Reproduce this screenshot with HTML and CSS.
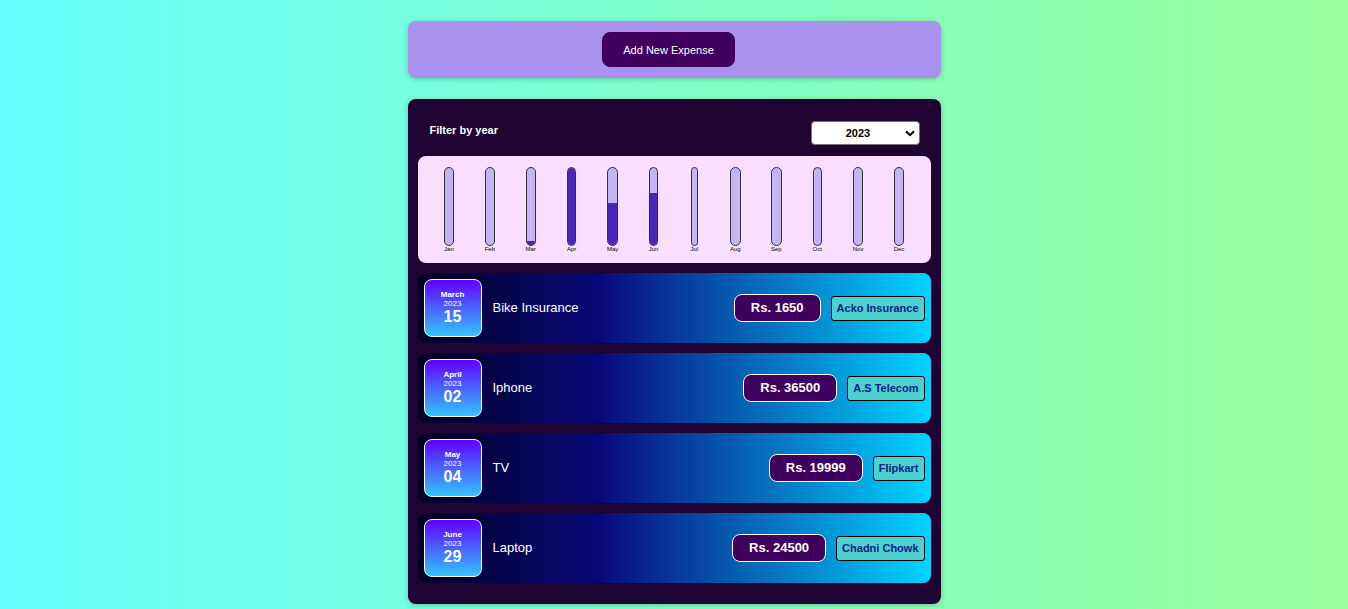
FILE: index.html
```html
<!DOCTYPE html>
<html lang="en">
<head>
<meta charset="utf-8">
<meta name="viewport" content="width=device-width, initial-scale=1">
<title>Expenses</title>
<link rel="stylesheet" href="styles.css">
</head>
<body>
<main class="page">
  <section class="new-expense">
    <button class="add-button" type="button">Add New Expense</button>
  </section>
  <section class="expenses">
    <div class="filter">
      <label class="filter-label" for="year">Filter by year</label>
      <span class="select-wrap">
        <select class="year-select" id="year">
          <option>2024</option>
          <option selected>2023</option>
          <option>2022</option>
        </select>
        <svg class="chevron" viewBox="0 0 10 7" aria-hidden="true"><path d="M1 1.2 5 5.2 9 1.2"/></svg>
      </span>
    </div>
    <div class="chart">
      <div class="month"><div class="bar"><div class="fill" style="height:0%"></div></div><span>Jan</span></div>
      <div class="month"><div class="bar"><div class="fill" style="height:0%"></div></div><span>Feb</span></div>
      <div class="month"><div class="bar"><div class="fill" style="height:5%"></div></div><span>Mar</span></div>
      <div class="month"><div class="bar"><div class="fill" style="height:100%"></div></div><span>Apr</span></div>
      <div class="month"><div class="bar"><div class="fill" style="height:55%"></div></div><span>May</span></div>
      <div class="month"><div class="bar"><div class="fill" style="height:67%"></div></div><span>Jun</span></div>
      <div class="month"><div class="bar"><div class="fill" style="height:0%"></div></div><span>Jul</span></div>
      <div class="month"><div class="bar"><div class="fill" style="height:0%"></div></div><span>Aug</span></div>
      <div class="month"><div class="bar"><div class="fill" style="height:0%"></div></div><span>Sep</span></div>
      <div class="month"><div class="bar"><div class="fill" style="height:0%"></div></div><span>Oct</span></div>
      <div class="month"><div class="bar"><div class="fill" style="height:0%"></div></div><span>Nov</span></div>
      <div class="month"><div class="bar"><div class="fill" style="height:0%"></div></div><span>Dec</span></div>
    </div>
    <ul class="list">
      <li class="item">
        <div class="date"><strong>March</strong><span>2023</span><b class="day">15</b></div>
        <h2 class="title">Bike Insurance</h2>
        <div class="price">Rs. 1650</div>
        <div class="place">Acko Insurance</div>
      </li>
      <li class="item">
        <div class="date"><strong>April</strong><span>2023</span><b class="day">02</b></div>
        <h2 class="title">Iphone</h2>
        <div class="price">Rs. 36500</div>
        <div class="place">A.S Telecom</div>
      </li>
      <li class="item">
        <div class="date"><strong>May</strong><span>2023</span><b class="day">04</b></div>
        <h2 class="title">TV</h2>
        <div class="price">Rs. 19999</div>
        <div class="place">Flipkart</div>
      </li>
      <li class="item">
        <div class="date"><strong>June</strong><span>2023</span><b class="day">29</b></div>
        <h2 class="title">Laptop</h2>
        <div class="price">Rs. 24500</div>
        <div class="place">Chadni Chowk</div>
      </li>
    </ul>
  </section>
</main>
</body>
</html>
```

FILE: styles.css
```css
* { box-sizing: border-box; }

body {
  margin: 0;
  min-height: 100vh;
  background: linear-gradient(to right, #66ffff, #99ff99);
  font-family: "Liberation Sans", Arial, sans-serif;
}

.page {
  display: flex;
  flex-direction: column;
  gap: 21px;
  max-width: 533px;
  margin: 0 auto;
  padding: 21px 0 5px;
}

.new-expense {
  padding: 11px;
  border-radius: 8px;
  background: #a892ee;
  box-shadow: 0 1px 5px rgba(0, 0, 0, 0.25);
  display: flex;
  justify-content: center;
}

.add-button {
  margin-right: 11px;
  padding: 12px 20px 10px;
  border: 1px solid #40005d;
  border-radius: 8px;
  background: #40005d;
  color: #fff;
  font: 11px/11px "Liberation Sans", Arial, sans-serif;
}

.expenses {
  padding: 11px 10px 21px;
  border-radius: 8px;
  background: #1f0433;
  box-shadow: 0 1px 5px rgba(0, 0, 0, 0.25);
}

.filter {
  display: flex;
  justify-content: space-between;
  align-items: flex-start;
  padding: 11px 11px 11px 12px;
}

.filter-label {
  padding-top: 2px;
  color: #fff;
  font-size: 11px;
  line-height: 14px;
  font-weight: bold;
}

.select-wrap {
  display: grid;
  align-items: center;
  width: 109px;
}

.year-select {
  grid-area: 1 / 1;
  width: 100%;
  height: 24px;
  padding: 0 14px 0 0;
  border: 1px solid #767676;
  border-radius: 4px;
  background: #fff;
  color: #000;
  font: bold 11px "Liberation Sans", Arial, sans-serif;
  text-align: center;
  text-align-last: center;
  appearance: none;
}

.chevron {
  grid-area: 1 / 1;
  justify-self: end;
  width: 10px;
  height: 7px;
  margin-right: 5px;
  pointer-events: none;
  fill: none;
  stroke: #000;
  stroke-width: 2;
}

.chart {
  display: grid;
  grid-template-columns: repeat(12, 1fr);
  justify-items: center;
  padding: 11px;
  border-radius: 8px;
  background: #f8dfff;
}

.month {
  display: flex;
  flex-direction: column;
  color: #000;
  font-size: 6px;
  line-height: 6px;
}

.bar {
  display: flex;
  flex-direction: column;
  justify-content: flex-end;
  height: 79px;
  overflow: hidden;
  border: 1px solid #313131;
  border-radius: 8px;
  background: #c3b4f3;
}

.fill { background: #4826b9; }

.list {
  display: flex;
  flex-direction: column;
  gap: 10px;
  margin: 10px 0 0;
  padding: 0;
  list-style: none;
}

.item {
  display: flex;
  align-items: center;
  padding: 6px;
  border-radius: 8px;
  background: linear-gradient(90deg, #020024 0%, #090979 35%, #00d4ff 100%);
}

.date {
  display: flex;
  flex-direction: column;
  align-items: center;
  justify-content: center;
  width: 58px;
  height: 58px;
  border: 1px solid #fff;
  border-radius: 8px;
  background: linear-gradient(#6200ff, #32c5ff);
  color: #fff;
  font-size: 8px;
  line-height: 9px;
}

.day {
  font-size: 16px;
  line-height: 18px;
}

.title {
  flex: 1;
  margin: 0 11px;
  color: #fff;
  font-size: 13px;
  line-height: 16px;
  font-weight: normal;
}

.price {
  margin-right: 10px;
  padding: 5px 16px;
  border: 1px solid #fff;
  border-radius: 8px;
  background: #40005d;
  color: #fff;
  font-size: 13px;
  line-height: 16px;
  font-weight: bold;
}

.place {
  padding: 5px;
  border: 1px solid #000;
  border-radius: 3px;
  background: #4dd0d0;
  color: #0c1c80;
  font-size: 11px;
  line-height: 13px;
  font-weight: bold;
}
```
